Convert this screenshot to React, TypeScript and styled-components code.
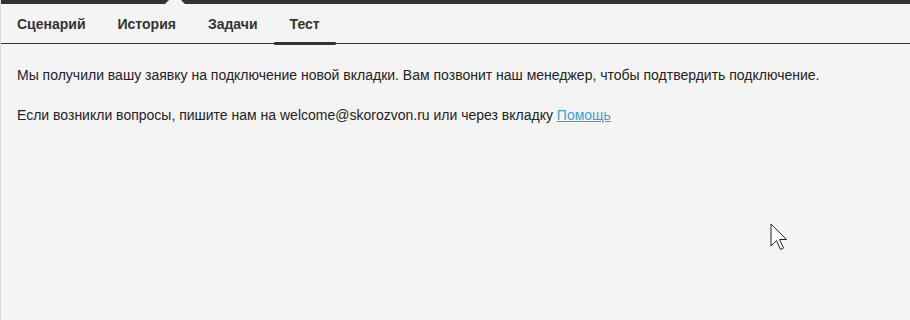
import React from "react";
import styled, { createGlobalStyle } from "styled-components";

const Global = createGlobalStyle`
  html, body { margin: 0; padding: 0; background: #f4f4f4; }
  body { font-family: "Liberation Sans", Arial, sans-serif; }
`;

const Page = styled.div`
  position: relative;
  width: 910px;
  height: 320px;
  background: #f4f4f4;
  border-left: 1px solid #dcdcdc;
  box-sizing: border-box;
  overflow: hidden;
`;

const TopBar = styled.div`
  position: relative;
  height: 4px;
  background: #333333;
`;

const Notch = styled.div`
  position: absolute;
  left: 164px;
  top: -6px;
  width: 0;
  height: 0;
  border-left: 10px solid transparent;
  border-right: 10px solid transparent;
  border-bottom: 10px solid #f4f4f4;
`;

const TabBar = styled.nav`
  display: flex;
  height: 40px;
  border-bottom: 1px solid #333333;
  box-sizing: border-box;
`;

const Tab = styled.div<{ $active?: boolean }>`
  position: relative;
  display: flex;
  align-items: center;
  padding: 1px 16px 0;
  font-size: 14px;
  font-weight: bold;
  color: #333333;
  cursor: pointer;
  ${(p) =>
    p.$active &&
    `
    &::after {
      content: "";
      position: absolute;
      left: 0;
      right: 0;
      bottom: -2px;
      height: 3px;
      background: #333333;
      border-radius: 1px;
    }
  `}
`;

const Content = styled.div`
  padding: 21px 16px 0;
  font-size: 14px;
  line-height: 20px;
  color: #222222;
`;

const Paragraph = styled.p`
  margin: 0 0 20px;
`;

const Link = styled.a`
  color: #3a9fd8;
  text-decoration: underline;
`;

const Cursor = styled.svg`
  position: absolute;
  left: 769px;
  top: 223px;
`;

export default function App() {
  return (
    <>
      <Global />
      <Page>
        <TopBar>
          <Notch />
        </TopBar>
        <TabBar>
          <Tab>Сценарий</Tab>
          <Tab>История</Tab>
          <Tab>Задачи</Tab>
          <Tab $active>Тест</Tab>
        </TabBar>
        <Content>
          <Paragraph>
            Мы получили вашу заявку на подключение новой вкладки. Вам позвонит наш менеджер, чтобы подтвердить подключение.
          </Paragraph>
          <Paragraph>
            Если возникли вопросы, пишите нам на welcome@skorozvon.ru или через вкладку <Link href="#">Помощь</Link>
          </Paragraph>
        </Content>
        <Cursor width="22" height="30" viewBox="0 0 22 30">
          <path
            d="M1 1 L1 23 L6.5 17.5 L10.5 26.5 L13.5 25 L9.5 16.5 L16.5 16.5 Z"
            fill="#ffffff"
            stroke="#222222"
            strokeWidth="1"
            strokeLinejoin="miter"
          />
        </Cursor>
      </Page>
    </>
  );
}
